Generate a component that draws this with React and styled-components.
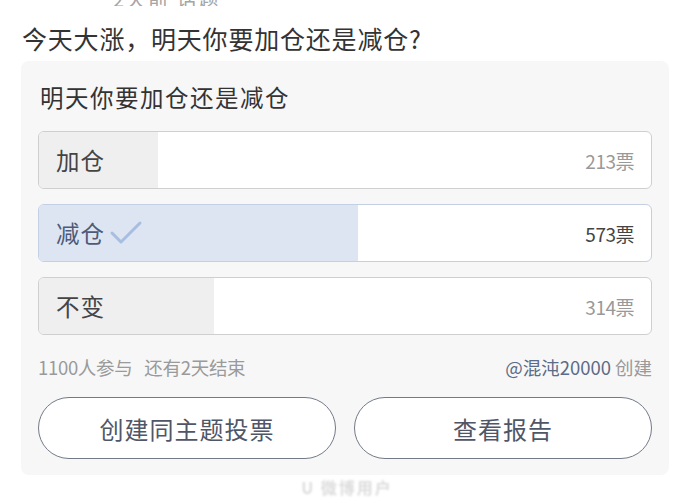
import React from "react";
import styled, { createGlobalStyle } from "styled-components";

const GlobalStyle = createGlobalStyle`
  html, body {
    margin: 0;
    padding: 0;
    background: #ffffff;
  }
  body {
    font-family: "Noto Sans CJK SC", "Noto Sans", sans-serif;
    color: #333333;
  }
`;

const Page = styled.div`
  width: 690px;
  height: 501px;
  overflow: hidden;
  display: flex;
  flex-direction: column;

  & > * {
    flex-shrink: 0;
  }
`;

const CutLine = styled.div`
  height: 6px;
  overflow: hidden;
  display: flex;
  align-items: flex-end;
  padding-left: 113px;
`;

const CutText = styled.span`
  flex-shrink: 0;
  font-size: 20px;
  line-height: 14px;
  height: 14px;
  color: #a5a5a5;
  letter-spacing: 2px;
`;

const Question = styled.div`
  margin: 16px 0 0 22px;
  font-size: 25px;
  line-height: 32px;
  letter-spacing: 0.8px;
  color: #333333;
`;

const Card = styled.div`
  margin: 7px 21px 0 21px;
  background: #f7f7f7;
  border-radius: 8px;
  padding: 21px 17px 16px 17px;
  display: flex;
  flex-direction: column;
`;

const CardTitle = styled.div`
  font-size: 23.5px;
  line-height: 30px;
  letter-spacing: 1.5px;
  color: #333333;
  padding-left: 2px;
`;

const Options = styled.div`
  margin-top: 19px;
  display: flex;
  flex-direction: column;
  gap: 15px;
`;

const Option = styled.div`
  position: relative;
  height: 58px;
  box-sizing: border-box;
  border: 1px solid ${(p) => (p.$chosen ? "#c3cfe2" : "#cfcfcf")};
  border-radius: 6px;
  background: #ffffff;
  overflow: hidden;
  display: flex;
  align-items: center;
  justify-content: space-between;
  padding: 0 17px 0 17px;
`;

const Fill = styled.div`
  position: absolute;
  left: 0;
  top: 0;
  bottom: 0;
  background: ${(p) => (p.$chosen ? "#dde5f3" : "#efefef")};
`;

const Label = styled.div`
  position: relative;
  display: flex;
  align-items: center;
  gap: 4px;
  font-size: 23.5px;
  letter-spacing: 1px;
  color: ${(p) => (p.$chosen ? "#4d5b78" : "#444444")};
`;

const Count = styled.div`
  position: relative;
  font-size: 19px;
  letter-spacing: -0.5px;
  color: ${(p) => (p.$chosen ? "#444444" : "#999999")};
`;

const Footer = styled.div`
  margin-top: 19px;
  display: flex;
  justify-content: space-between;
  font-size: 18.5px;
  line-height: 26px;
  color: #9a9a9a;
`;

const Meta = styled.span`
  letter-spacing: -0.3px;
  word-spacing: 8px;
`;

const Author = styled.span`
  color: #5c6b88;
  margin-right: 4px;
`;

const Buttons = styled.div`
  margin-top: 17px;
  display: grid;
  grid-template-columns: 1fr 1fr;
  gap: 18px;
`;

const Button = styled.button`
  height: 62px;
  border: 1.3px solid #737a87;
  border-radius: 31px;
  background: #ffffff;
  font-family: "Noto Sans CJK SC", "Noto Sans", sans-serif;
  font-size: 24px;
  letter-spacing: 1px;
  color: #4f5667;
  cursor: pointer;
`;

const Watermark = styled.div`
  margin-top: 2px;
  text-align: center;
  font-size: 16px;
  line-height: 20px;
  font-weight: 700;
  color: #dcdcdc;
  letter-spacing: 2px;
  filter: blur(0.8px);
  padding-left: 4px;
`;

const options = [
  { label: "加仓", votes: 213 },
  { label: "减仓", votes: 573, chosen: true },
  { label: "不变", votes: 314 },
];

const total = 1100;

const Check = () => (
  <svg width="34" height="26" viewBox="0 0 34 26">
    <path
      d="M3 13 L12 22 L31 3"
      fill="none"
      stroke="#a9bde0"
      strokeWidth="3"
      strokeLinecap="round"
      strokeLinejoin="round"
    />
  </svg>
);

export default function App() {
  return (
    <Page>
      <GlobalStyle />
      <CutLine>
        <CutText>2天前 话题</CutText>
      </CutLine>
      <Question>今天大涨，明天你要加仓还是减仓?</Question>
      <Card>
        <CardTitle>明天你要加仓还是减仓</CardTitle>
        <Options>
          {options.map((o) => (
            <Option key={o.label} $chosen={o.chosen}>
              <Fill
                $chosen={o.chosen}
                style={{ width: `${(o.votes / total) * 100}%` }}
              />
              <Label $chosen={o.chosen}>
                {o.label}
                {o.chosen && <Check />}
              </Label>
              <Count $chosen={o.chosen}>{o.votes}票</Count>
            </Option>
          ))}
        </Options>
        <Footer>
          <Meta>1100人参与 还有2天结束</Meta>
          <span>
            <Author>@混沌20000</Author>创建
          </span>
        </Footer>
        <Buttons>
          <Button>创建同主题投票</Button>
          <Button>查看报告</Button>
        </Buttons>
      </Card>
      <Watermark>U 微博用户</Watermark>
    </Page>
  );
}
